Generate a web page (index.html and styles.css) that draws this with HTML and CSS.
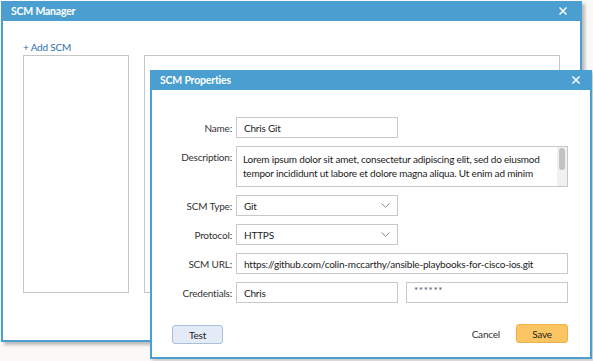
FILE: index.html
```html
<!DOCTYPE html>
<html lang="en">
<head>
    <meta charset="UTF-8">
    <title>SCM Manager</title>
    <link rel="stylesheet" href="styles.css">
</head>
<body>
    <!-- Back window: SCM list -->
    <div class="window manager">
        <div class="window-header">
            <span class="window-title">SCM Manager</span>
            <span class="close-btn">
                <svg width="8" height="8" viewBox="0 0 8 8"><path d="M0.5 0.5L7.5 7.5M7.5 0.5L0.5 7.5" stroke="#fff" stroke-width="1.5"/></svg>
            </span>
        </div>
        <div class="manager-body">
            <a class="add-link">+ Add SCM</a>
            <div class="manager-panes">
                <div class="pane pane-list"></div>
                <div class="pane pane-detail"></div>
            </div>
        </div>
    </div>

    <!-- Front window: properties dialog -->
    <div class="window props">
        <div class="window-header">
            <span class="window-title">SCM Properties</span>
            <span class="close-btn">
                <svg width="8" height="8" viewBox="0 0 8 8"><path d="M0.5 0.5L7.5 7.5M7.5 0.5L0.5 7.5" stroke="#fff" stroke-width="1.5"/></svg>
            </span>
        </div>
        <div class="props-body">
            <div class="form">
                <label class="field-label">Name:</label>
                <div class="input short">Chris Git</div>

                <label class="field-label top">Description:</label>
                <div class="textarea">
                    <div class="textarea-text">Lorem ipsum dolor sit amet, consectetur adipiscing elit, sed do eiusmod tempor incididunt ut labore et dolore magna aliqua. Ut enim ad minim</div>
                    <div class="scroll-track"><div class="scroll-thumb"></div></div>
                </div>

                <label class="field-label">SCM Type:</label>
                <div class="input short select">
                    <span>Git</span>
                    <svg width="9" height="5" viewBox="0 0 9 5"><path d="M0.5 0.5L4.5 4.3L8.5 0.5" fill="none" stroke="#8a8a8a" stroke-width="1"/></svg>
                </div>

                <label class="field-label">Protocol:</label>
                <div class="input short select">
                    <span>HTTPS</span>
                    <svg width="9" height="5" viewBox="0 0 9 5"><path d="M0.5 0.5L4.5 4.3L8.5 0.5" fill="none" stroke="#8a8a8a" stroke-width="1"/></svg>
                </div>

                <label class="field-label">SCM URL:</label>
                <div class="input wide">https://github.com/colin-mccarthy/ansible-playbooks-for-cisco-ios.git</div>

                <label class="field-label">Credentials:</label>
                <div class="cred-row">
                    <div class="input short">Chris</div>
                    <div class="input short password">******</div>
                </div>
            </div>

            <div class="footer">
                <button class="btn btn-test">Test</button>
                <div class="footer-right">
                    <span class="cancel">Cancel</span>
                    <button class="btn btn-save">Save</button>
                </div>
            </div>
        </div>
    </div>
</body>
</html>
```

FILE: styles.css
```css
body {
    margin: 0;
    width: 593px;
    height: 361px;
    overflow: hidden;
    background-color: #faf9f7;
    font-family: Lato, "Open Sans", sans-serif;
    font-size: 10px;
    letter-spacing: -0.2px;
    color: #222;
    position: relative;
}
.window {
    position: absolute;
    box-sizing: border-box;
    background-color: #fff;
    border: 2px solid #4a9fd0;
    border-top: none;
    display: flex;
    flex-direction: column;
}
.window.manager {
    left: 1px;
    top: 1px;
    width: 581px;
    height: 341px;
    box-shadow: 3px 3px 3px rgba(0, 0, 0, 0.25);
}
.window.props {
    left: 150px;
    top: 70px;
    width: 442px;
    height: 289px;
    box-shadow: 2px 2px 3px rgba(0, 0, 0, 0.2);
}
.window-header {
    height: 20px;
    margin: 0 -2px;
    padding: 0 10px;
    background-color: #4a9fd0;
    display: flex;
    align-items: center;
    justify-content: space-between;
    flex-shrink: 0;
}
.manager .window-header {
    padding-right: 15px;
}
.props .window-header {
    padding-right: 12px;
}
.window-title {
    color: #fff;
    font-weight: bold;
    font-size: 10.5px;
}
.close-btn {
    display: flex;
}
.manager-body {
    padding: 19px 0 0 20px;
}
.add-link {
    display: block;
    color: #2d6fae;
    line-height: 14px;
    margin-bottom: 1px;
}
.manager-panes {
    display: flex;
    gap: 15px;
}
.pane {
    box-sizing: border-box;
    height: 238px;
    border: 1px solid #c6c6c6;
}
.pane-list {
    width: 106px;
}
.pane-detail {
    width: 416px;
}
.props-body {
    flex: 1;
    display: flex;
    flex-direction: column;
    padding-top: 27px;
}
.form {
    display: grid;
    grid-template-columns: 80px auto;
    column-gap: 4px;
    row-gap: 8px;
    align-items: center;
    justify-items: start;
}
.field-label {
    justify-self: end;
    color: #333;
}
.field-label.top {
    align-self: start;
    padding-top: 5px;
}
.input {
    box-sizing: border-box;
    height: 21px;
    border: 1px solid #c8c8c8;
    padding: 0 7px;
    display: flex;
    align-items: center;
    white-space: nowrap;
    overflow: hidden;
}
.input.short {
    width: 162px;
}
.input.wide {
    width: 332px;
}
.input.select {
    justify-content: space-between;
}
.input.password {
    color: #4a5468;
    letter-spacing: 0.6px;
    align-items: flex-start;
    padding-top: 1px;
}
.cred-row {
    display: flex;
    gap: 8px;
}
.textarea {
    box-sizing: border-box;
    width: 332px;
    height: 41px;
    border: 1px solid #c8c8c8;
    display: flex;
}
.textarea-text {
    flex: 1;
    padding: 5px 6px 0 6px;
    line-height: 14px;
    overflow: hidden;
}
.scroll-track {
    width: 10px;
    background-color: #f1f1f1;
    padding: 1px 2px;
    box-sizing: border-box;
}
.scroll-thumb {
    height: 22px;
    border-radius: 3px;
    background-color: #c2c2c2;
}
.footer {
    margin-top: auto;
    padding: 0 22px 13px 20px;
    display: flex;
    justify-content: space-between;
    align-items: center;
}
.footer-right {
    display: flex;
    align-items: center;
    gap: 16px;
}
.cancel {
    color: #333;
}
.btn {
    font-family: inherit;
    font-size: 10px;
    letter-spacing: -0.2px;
    color: #222;
    height: 19px;
    padding: 0;
    border-radius: 3px;
    cursor: pointer;
}
.btn-test {
    width: 51px;
    background-color: #e3ebf7;
    border: 1px solid #a9bfdc;
    margin-bottom: -1px;
}
.btn-save {
    width: 52px;
    background-color: #fcc564;
    border: 1px solid #efb048;
    margin-bottom: 1px;
}
```
